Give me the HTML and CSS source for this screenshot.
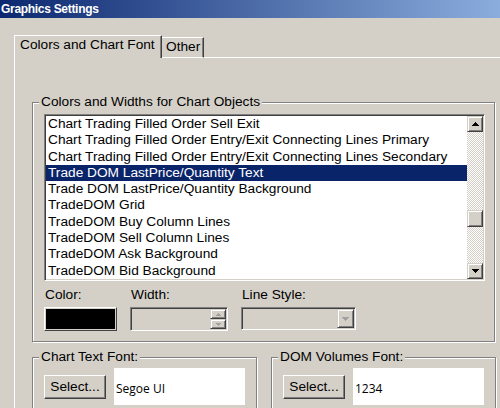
FILE: index.html
```html
<!DOCTYPE html>
<html>
<head>
<meta charset="utf-8">
<link rel="stylesheet" href="styles.css">
</head>
<body>
<div class="window">
  <div class="titlebar">Graphics Settings</div>
  <div class="client">
    <div class="tabstrip">
      <div class="tab tab-active">Colors and Chart Font</div>
      <div class="tab tab-other">Other</div>
      <div class="tab-fill"></div>
    </div>
    <div class="panel">
      <div class="group group-objects">
        <div class="group-title">Colors and Widths for Chart Objects</div>
        <div class="listbox">
          <div class="list-items">
            <div class="item">Chart Trading Filled Order Sell Exit</div>
            <div class="item">Chart Trading Filled Order Entry/Exit Connecting Lines Primary</div>
            <div class="item">Chart Trading Filled Order Entry/Exit Connecting Lines Secondary</div>
            <div class="item item-selected">Trade DOM LastPrice/Quantity Text</div>
            <div class="item">Trade DOM LastPrice/Quantity Background</div>
            <div class="item">TradeDOM Grid</div>
            <div class="item">TradeDOM Buy Column Lines</div>
            <div class="item">TradeDOM Sell Column Lines</div>
            <div class="item">TradeDOM Ask Background</div>
            <div class="item">TradeDOM Bid Background</div>
          </div>
          <div class="vscroll">
            <div class="raised sb-btn"><svg width="7" height="4" viewBox="0 0 7 4" shape-rendering="crispEdges"><polygon points="3.5,0 7,4 0,4" fill="#000"/></svg></div>
            <div class="sb-track sb-track-top"></div>
            <div class="raised sb-thumb"></div>
            <div class="sb-track sb-track-rest"></div>
            <div class="raised sb-btn"><svg width="7" height="4" viewBox="0 0 7 4" shape-rendering="crispEdges"><polygon points="0,0 7,0 3.5,4" fill="#000"/></svg></div>
          </div>
        </div>
        <div class="props">
          <div class="prop prop-color">
            <div class="prop-label">Color:</div>
            <div class="swatch"><div class="swatch-fill"></div></div>
          </div>
          <div class="prop prop-width">
            <div class="prop-label">Width:</div>
            <div class="sunken spin">
              <div class="spin-field"></div>
              <div class="spin-btns">
                <div class="raised spin-btn"><svg width="5" height="3" viewBox="0 0 5 3" shape-rendering="crispEdges"><polygon points="2.5,0 5,3 0,3" fill="#a0a0a0"/></svg></div>
                <div class="raised spin-btn"><svg width="5" height="3" viewBox="0 0 5 3" shape-rendering="crispEdges"><polygon points="0,0 5,0 2.5,3" fill="#a0a0a0"/></svg></div>
              </div>
            </div>
          </div>
          <div class="prop prop-style">
            <div class="prop-label">Line Style:</div>
            <div class="sunken combo">
              <div class="combo-field"></div>
              <div class="raised combo-btn"><svg width="7" height="4" viewBox="0 0 7 4" shape-rendering="crispEdges"><polygon points="0,0 7,0 3.5,4" fill="#a0a0a0"/></svg></div>
            </div>
          </div>
        </div>
      </div>
      <div class="font-groups">
        <div class="group group-font">
          <div class="group-title">Chart Text Font:</div>
          <div class="font-row">
            <div class="btn">Select...</div>
            <div class="font-preview">Segoe UI</div>
          </div>
        </div>
        <div class="group group-font">
          <div class="group-title">DOM Volumes Font:</div>
          <div class="font-row">
            <div class="btn">Select...</div>
            <div class="font-preview">1234</div>
          </div>
        </div>
      </div>
    </div>
  </div>
</div>
</body>
</html>
```
FILE: styles.css
```css
html, body {
  margin: 0;
  padding: 0;
}
body {
  width: 500px;
  height: 408px;
  overflow: hidden;
  background: #d4d0c8;
  font-family: "Liberation Sans", Arial, sans-serif;
  font-size: 13.7px;
  color: #000;
}
* {
  box-sizing: border-box;
}
.window {
  display: flex;
  flex-direction: column;
  width: 500px;
  height: 408px;
}
.titlebar {
  height: 18px;
  line-height: 18px;
  padding-left: 1px;
  background: linear-gradient(to right, #0c2870, #8aaddd);
  color: #fff;
  font-weight: bold;
  font-size: 12px;
  letter-spacing: -0.3px;
  white-space: nowrap;
}
.client {
  flex: 1;
  display: flex;
  flex-direction: column;
  padding: 17px 0 0 14px;
}
.tabstrip {
  display: flex;
  align-items: flex-end;
  height: 23px;
}
.tab {
  line-height: 16px;
  white-space: nowrap;
}
.tab-active {
  width: 148px;
  height: 23px;
  border-top: 1px solid #fff;
  border-left: 1px solid #fff;
  border-right: 1px solid #404040;
  box-shadow: inset -1px 0 #808080;
  padding: 1px 0 0 5px;
}
.tab-other {
  width: 42px;
  height: 21px;
  border-top: 1px solid #fff;
  border-right: 1px solid #404040;
  border-bottom: 1px solid #fff;
  box-shadow: inset -1px 0 #808080;
  padding: 1px 0 0 4px;
}
.tab-fill {
  flex: 1;
  border-bottom: 1px solid #fff;
}
.panel {
  flex: 1;
  border-left: 1px solid #fff;
  display: flex;
  flex-direction: column;
}

/* etched group boxes */
.group {
  display: flex;
  flex-direction: column;
  align-items: flex-start;
  border: 1px solid #808080;
  box-shadow: 1px 1px 0 #fff, inset 1px 1px 0 #fff;
}
.group-title {
  margin: -9px 0 0 -5px;
  padding: 0 2px;
  line-height: 16px;
  background: #d4d0c8;
  white-space: nowrap;
}
.group-objects {
  width: 463px;
  margin: 44px 0 0 17px;
  padding: 0 0 10px 11px;
}

/* bevels */
.raised {
  background: #d4d0c8;
  border: 1px solid;
  border-color: #d4d0c8 #404040 #404040 #d4d0c8;
  box-shadow: inset 1px 1px #fff, inset -1px -1px #808080;
}
.sunken {
  border: 1px solid;
  border-color: #808080 #fff #fff #808080;
  box-shadow: inset 1px 1px #404040, inset -1px -1px #d4d0c8;
  padding: 1px;
}

/* listbox */
.listbox {
  width: 441px;
  height: 167px;
  margin-top: 4px;
  display: flex;
  background: #fff;
  border: 1px solid;
  border-color: #808080 #fff #fff #808080;
  box-shadow: inset 1px 1px #404040, inset -1px -1px #d4d0c8;
  padding: 1px;
}
.list-items {
  flex: 1;
  overflow: hidden;
}
.item {
  height: 16.3px;
  line-height: 16.3px;
  padding-left: 2px;
  white-space: nowrap;
}
.item-selected {
  background: #0a246a;
  color: #fff;
}
.vscroll {
  width: 16px;
  display: flex;
  flex-direction: column;
}
.sb-btn {
  height: 16px;
  display: flex;
  align-items: center;
  justify-content: center;
}
.sb-btn svg {
  display: block;
}
.sb-track {
  background: repeating-conic-gradient(#fff 0 25%, #d4d0c8 0 50%) 0 0 / 2px 2px;
}
.sb-track-top {
  height: 78px;
}
.sb-thumb {
  height: 17px;
}
.sb-track-rest {
  flex: 1;
}

/* color / width / style row */
.props {
  display: flex;
  gap: 13px;
  margin-top: 6px;
}
.prop {
  display: flex;
  flex-direction: column;
  align-items: flex-start;
}
.prop-label {
  line-height: 16px;
  padding-left: 1px;
  margin-bottom: 4px;
  white-space: nowrap;
}
.swatch {
  width: 73px;
  height: 24px;
  border: 1px solid;
  border-color: #fff #404040 #404040 #fff;
  padding: 1px;
  display: flex;
}
.swatch-fill {
  flex: 1;
  background: #000;
}
.spin {
  width: 98px;
  height: 24px;
  display: flex;
  background: #d4d0c8;
}
.spin-field {
  flex: 1;
}
.spin-btns {
  width: 16px;
  display: flex;
  flex-direction: column;
}
.spin-btn {
  flex: 1;
  display: flex;
  align-items: center;
  justify-content: center;
}
.spin-btn svg, .combo-btn svg {
  display: block;
}
.combo {
  width: 115px;
  height: 23px;
  display: flex;
  background: #d4d0c8;
}
.combo-field {
  flex: 1;
}
.combo-btn {
  width: 17px;
  display: flex;
  align-items: center;
  justify-content: center;
}

/* font groups */
.font-groups {
  display: flex;
  gap: 14px;
  margin: 15px 0 0 17px;
}
.group-font {
  width: 225px;
  padding: 0 0 10px 11px;
}
.font-row {
  display: flex;
  align-items: center;
  gap: 8px;
  margin-top: 3px;
}
.btn {
  width: 62px;
  height: 24px;
  line-height: 22px;
  text-align: center;
  white-space: nowrap;
  border: 1px solid;
  border-color: #fff #404040 #404040 #fff;
  box-shadow: inset -1px -1px #808080;
}
.font-preview {
  width: 131px;
  height: 37px;
  background: #fff;
  display: flex;
  align-items: center;
  padding: 3px 0 0 2px;
  font-family: "Open Sans", "Noto Sans", sans-serif;
  font-size: 12px;
}
```
